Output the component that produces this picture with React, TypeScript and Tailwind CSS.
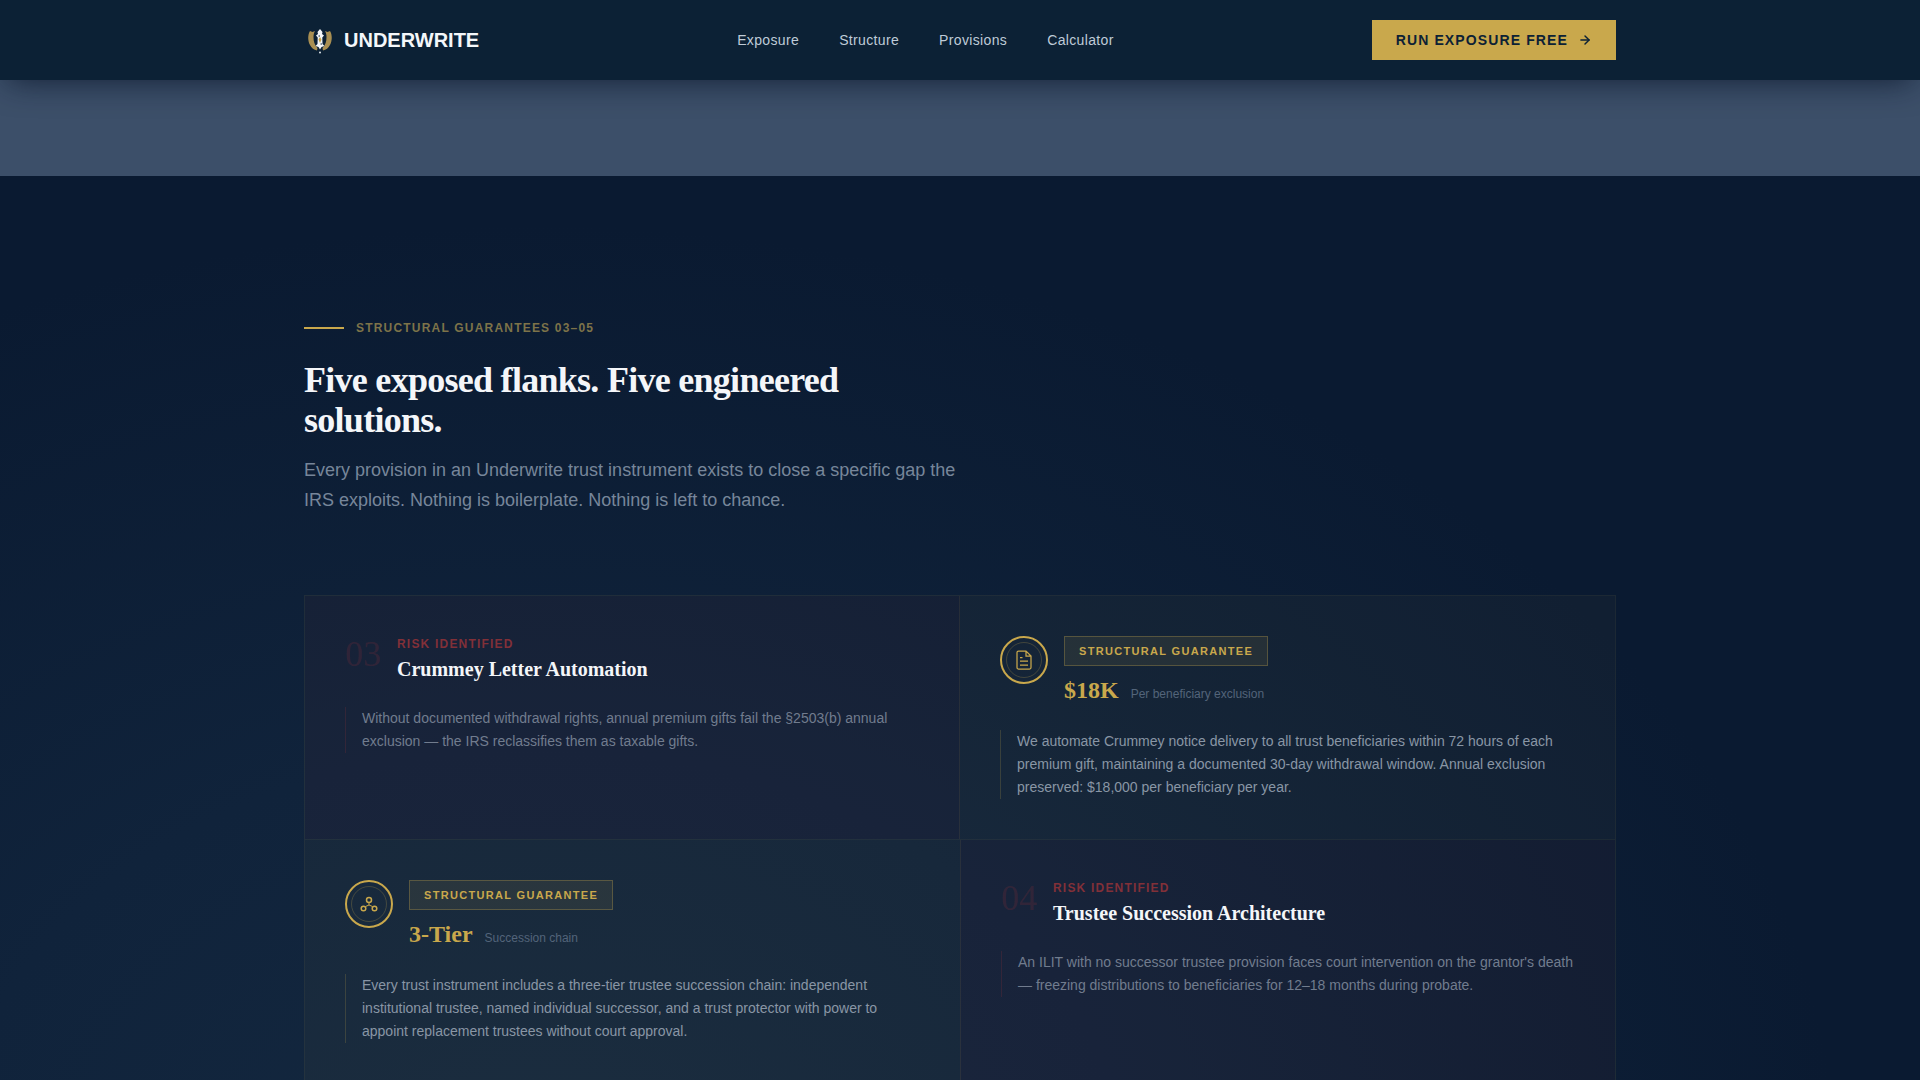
import { ArrowRight } from "lucide-react";
import type { ReactNode } from "react";

const navItems = ["Exposure", "Structure", "Provisions", "Calculator"];

function Logo() {
  return (
    <svg viewBox="0 0 32 32" className="size-8" aria-hidden="true">
      <g fill="#a98f52">
        <path d="M6 7C3.500 11 3.800 17 6 21C7.500 24 10 26 13 26.500L13.500 24C10.500 21 9.500 17.500 9.500 13C9.500 10.500 10 8.500 11 7L8.500 8Z" />
        <path d="M26 7C28.500 11 28.200 17 26 21C24.500 24 22 26 19 26.500L18.500 24C21.500 21 22.500 17.500 22.500 13C22.500 10.500 22 8.500 21 7L23.500 8Z" />
      </g>
      <path fill="#f4f7fa" d="M16 5L18.500 8L18 10L20 11.500L18.300 13.500L18.500 20L20.500 22L17.500 23L16 25.500L14.500 23L11.500 22L13.500 20L13.700 13.500L12 11.500L14 10L13.500 8Z" />
      <path d="M16 13L17.500 15.500L16 19L14.500 15.500Z" fill="#c9a84c" />
      <path d="M14.500 12H16M16.500 20H18" stroke="#0c2135" strokeWidth="1" />
      <circle cx="16" cy="28.500" r="1" fill="#dfe6ec" />
    </svg>
  );
}

function DocumentIcon() {
  return (
    <svg viewBox="0 0 20 20" className="size-5" fill="none" stroke="currentColor" strokeWidth="1.25" aria-hidden="true">
      <path d="M12 1H4.500Q3 1 3 2.500V17.500Q3 19 4.500 19H15.500Q17 19 17 17.500V6L12 1ZM12 1V6H17" />
      <path d="M6 7.500H8.500M6 11H14M6 15H14" />
    </svg>
  );
}

function ChainIcon() {
  return (
    <svg viewBox="0 0 20 20" className="size-5" fill="none" stroke="currentColor" strokeWidth="1.500" aria-hidden="true">
      <circle cx="10" cy="6" r="2.500" />
      <circle cx="4.500" cy="14.500" r="2.300" />
      <circle cx="15.500" cy="14.500" r="2.300" />
      <path d="M10 8.500V11M6.500 12.500L10 11L13.500 12.500" strokeWidth="1" />
    </svg>
  );
}

function RiskCell({ num, title, text, edge }: { num: string; title: string; text: string; edge: string }) {
  return (
    <article className={`border-[#c9a84c]/10 bg-[#a02c30]/6 p-10 ${edge}`}>
      <div className="flex gap-4">
        <span className="font-['Liberation_Serif',serif] text-4xl leading-9 text-[#a03038]/20">{num}</span>
        <div>
          <p className="text-xs font-bold tracking-widest text-[#823038]">RISK IDENTIFIED</p>
          <h3 className="mt-1 font-['Liberation_Serif',serif] text-xl leading-[27px] font-bold text-[#f4f6f9]">{title}</h3>
        </div>
      </div>
      <p className="mt-6 border-l border-[#a03038]/20 pl-4 text-sm leading-[23px] text-[#717c8e]">{text}</p>
    </article>
  );
}

function GuaranteeCell({ icon, value, label, text }: { icon: ReactNode; value: string; label: string; text: string }) {
  return (
    <article className="bg-[#c9a84c]/4 p-10">
      <div className="flex gap-4">
        <div className="flex size-12 shrink-0 items-center justify-center rounded-full border-2 border-[#c9a84c] text-[#c9a84c]">
          <div className="flex size-9 items-center justify-center rounded-full border border-[#c9a84c]/25">{icon}</div>
        </div>
        <div>
          <p className="w-fit border border-[#c9a84c]/30 bg-[#c9a84c]/10 px-3.5 py-1.5 text-[11px] leading-4 font-bold tracking-[0.12em] text-[#c9a84c]">
            STRUCTURAL GUARANTEE
          </p>
          <p className="mt-2 flex items-baseline gap-3">
            <strong className="font-['Liberation_Serif',serif] text-2xl leading-8 text-[#c9a84c]">{value}</strong>
            <span className="text-xs text-[#53647a]">{label}</span>
          </p>
        </div>
      </div>
      <p className="mt-6 border-l border-[#c9a84c]/20 pl-4 text-sm leading-[23px] text-[#8996a5]">{text}</p>
    </article>
  );
}

export default function App() {
  return (
    <div className="h-screen overflow-hidden bg-[#0a1a31] font-['Liberation_Sans',Arial,sans-serif]">
      <header className="relative z-10 bg-[#0c2135] shadow-[0_8px_32px_-8px_rgba(6,18,38,0.8)]">
        <div className="mx-auto flex h-20 max-w-[1440px] items-center justify-between px-16">
          <a href="#top" className="flex items-center gap-2 text-xl font-bold text-[#f4f7fa]">
            <Logo />
            UNDERWRITE
          </a>
          <nav className="flex gap-10 text-sm tracking-wide text-[#bfcbd8]">
            {navItems.map((item) => (
              <a key={item} href={`#${item.toLowerCase()}`}>{item}</a>
            ))}
          </nav>
          <button type="button" className="flex h-10 items-center gap-2.5 bg-[#c9a84c] px-6 text-sm font-bold tracking-[0.08em] text-[#0c2135]">
            RUN EXPOSURE FREE
            <ArrowRight className="size-3.5" strokeWidth={2.5} aria-hidden="true" />
          </button>
        </div>
      </header>

      <div className="h-24 bg-[#3c4f69]" />

      <main className="bg-[radial-gradient(ellipse_1300px_950px_at_28%_95%,#14283f_0%,#10233b_45%,#0a1a31_100%)]">
        <section className="mx-auto max-w-[1440px] px-16 py-36">
          <div className="max-w-2xl">
            <p className="flex items-center gap-3 text-xs font-bold tracking-widest text-[#7d7349]">
              <span className="h-0.5 w-10 bg-[#c9a84c]" />
              STRUCTURAL GUARANTEES 03–05
            </p>
            <h2 className="mt-6 font-['Liberation_Serif',serif] text-4xl leading-10 font-bold tracking-[-0.02em] text-[#f4f6f9]">
              Five exposed flanks. Five engineered solutions.
            </h2>
            <p className="mt-[15px] text-lg leading-[30px] text-[#77869a]">
              Every provision in an Underwrite trust instrument exists to close a specific gap the IRS exploits. Nothing is boilerplate. Nothing is left to chance.
            </p>
          </div>

          <div className="mt-20 border border-[#c9a84c]/10">
            <div className="grid grid-cols-2 border-b border-[#c9a84c]/10">
              <RiskCell
                num="03"
                title="Crummey Letter Automation"
                text="Without documented withdrawal rights, annual premium gifts fail the §2503(b) annual exclusion — the IRS reclassifies them as taxable gifts."
                edge="border-r"
              />
              <GuaranteeCell
                icon={<DocumentIcon />}
                value="$18K"
                label="Per beneficiary exclusion"
                text="We automate Crummey notice delivery to all trust beneficiaries within 72 hours of each premium gift, maintaining a documented 30-day withdrawal window. Annual exclusion preserved: $18,000 per beneficiary per year."
              />
            </div>
            <div className="grid grid-cols-2">
              <GuaranteeCell
                icon={<ChainIcon />}
                value="3-Tier"
                label="Succession chain"
                text="Every trust instrument includes a three-tier trustee succession chain: independent institutional trustee, named individual successor, and a trust protector with power to appoint replacement trustees without court approval."
              />
              <RiskCell
                num="04"
                title="Trustee Succession Architecture"
                text="An ILIT with no successor trustee provision faces court intervention on the grantor's death — freezing distributions to beneficiaries for 12–18 months during probate."
                edge="border-l"
              />
            </div>
          </div>
        </section>
      </main>
    </div>
  );
}
